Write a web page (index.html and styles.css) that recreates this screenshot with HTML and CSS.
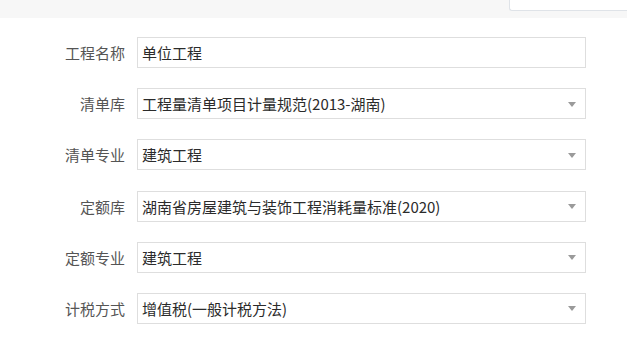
FILE: index.html
```html
<!DOCTYPE html>
<html lang="zh-CN">
<head>
<meta charset="utf-8">
<title>工程设置</title>
<link rel="stylesheet" href="styles.css">
</head>
<body>
<div class="topbar">
  <div class="top-box"></div>
</div>
<form class="form">
  <div class="row">
    <label class="label">工程名称</label>
    <div class="field">单位工程</div>
  </div>
  <div class="row">
    <label class="label">清单库</label>
    <div class="field select">工程量清单项目计量规范(2013-湖南)<span class="caret"></span></div>
  </div>
  <div class="row">
    <label class="label">清单专业</label>
    <div class="field select">建筑工程<span class="caret"></span></div>
  </div>
  <div class="row">
    <label class="label">定额库</label>
    <div class="field select">湖南省房屋建筑与装饰工程消耗量标准(2020)<span class="caret"></span></div>
  </div>
  <div class="row">
    <label class="label">定额专业</label>
    <div class="field select">建筑工程<span class="caret"></span></div>
  </div>
  <div class="row">
    <label class="label">计税方式</label>
    <div class="field select">增值税(一般计税方法)<span class="caret"></span></div>
  </div>
</form>
</body>
</html>
```

FILE: styles.css
```css
html, body {
  margin: 0;
  padding: 0;
  background: #ffffff;
  font-family: "Noto Sans CJK SC", "Noto Sans", sans-serif;
}

.topbar {
  height: 18px;
  background: #f7f7f7;
  display: flex;
  justify-content: flex-end;
  align-items: flex-start;
}

.top-box {
  width: 117px;
  height: 10px;
  background: #ffffff;
  border-left: 1px solid #dfe3e8;
  border-bottom: 1px solid #dfe3e8;
  border-bottom-left-radius: 3px;
}

.form {
  display: flex;
  flex-direction: column;
  gap: 20.2px;
  padding-top: 19px;
  margin: 0;
}

.row {
  display: flex;
  align-items: center;
  height: 31px;
}

.label {
  width: 137px;
  padding-right: 12px;
  box-sizing: border-box;
  text-align: right;
  font-size: 15px;
  color: #555555;
}

.field {
  position: relative;
  box-sizing: border-box;
  width: 449px;
  height: 31px;
  border: 1.5px solid #dedede;
  padding: 0 24px 0 4px;
  display: flex;
  align-items: center;
  font-size: 15px;
  color: #2b2b2b;
  white-space: nowrap;
}

.caret {
  position: absolute;
  right: 9px;
  top: 50%;
  margin-top: -2px;
  width: 0;
  height: 0;
  border-left: 4px solid transparent;
  border-right: 4px solid transparent;
  border-top: 5px solid #9a9a9a;
}
```
